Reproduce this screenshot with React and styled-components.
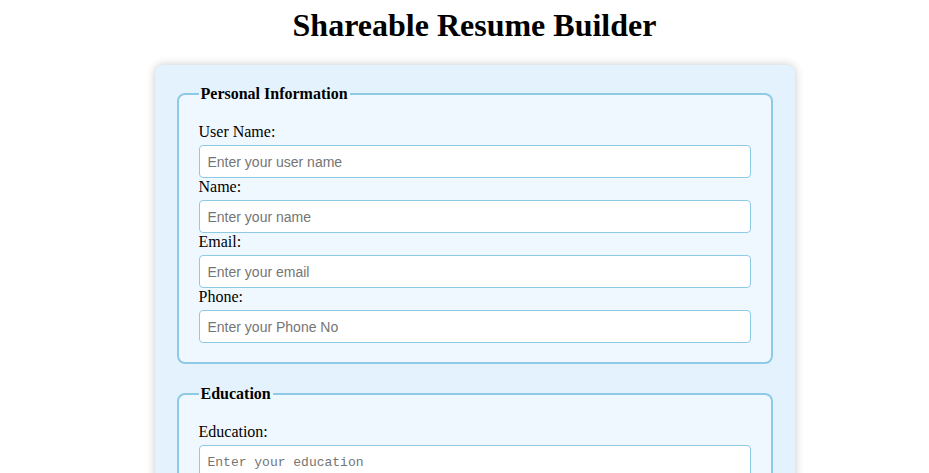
import React from "react";
import styled, { createGlobalStyle } from "styled-components";

const Global = createGlobalStyle`
  html, body { margin: 0; padding: 0; background: #ffffff; }
  body { font-family: "Liberation Serif", "Times New Roman", serif; color: #000; }
`;

const Page = styled.div`
  padding: 7px 0 40px 20px;
`;

const Title = styled.h1`
  margin: 0 0 21px;
  font-size: 32px;
  line-height: 37px;
  font-weight: bold;
  text-align: center;
`;

const Card = styled.form`
  width: 640px;
  box-sizing: border-box;
  margin: 0 auto;
  padding: 20px 20px 20px;
  background: #e3f2fd;
  border-radius: 8px;
  box-shadow: 0 0 10px rgba(0, 0, 0, 0.22);
`;

const Fieldset = styled.fieldset`
  margin: 0 2px 21px;
  padding: 20px 20px 19px;
  border: 2px solid #8ecae6;
  border-radius: 8px;
  background: #f0f8ff;
`;

const Legend = styled.legend`
  padding: 0 2px;
  font-size: 16px;
  font-weight: bold;
  line-height: 18px;
`;

const Label = styled.label`
  display: block;
  font-size: 16px;
  line-height: 18px;
  margin-bottom: 4px;
`;

const Input = styled.input`
  display: block;
  width: 100%;
  box-sizing: border-box;
  height: 33px;
  padding: 0 8px;
  border: 1px solid #8ecae6;
  border-radius: 4px;
  background: #fff;
  font-family: "Liberation Sans", Arial, sans-serif;
  font-size: 14px;
  outline: none;
  &::placeholder { color: #757575; }
`;

const TextArea = styled.textarea`
  display: block;
  width: 100%;
  box-sizing: border-box;
  height: 60px;
  padding: 9px 8px;
  border: 1px solid #8ecae6;
  border-radius: 4px;
  background: #fff;
  font-family: "Liberation Mono", "Courier New", monospace;
  font-size: 13px;
  resize: vertical;
  outline: none;
  &::placeholder { color: #757575; }
`;

const fields = [
  { id: "username", label: "User Name:", ph: "Enter your user name" },
  { id: "name", label: "Name:", ph: "Enter your name" },
  { id: "email", label: "Email:", ph: "Enter your email" },
  { id: "phone", label: "Phone:", ph: "Enter your Phone No" },
];

export default function App() {
  return (
    <>
      <Global />
      <Page>
        <Title>Shareable Resume Builder</Title>
        <Card>
          <Fieldset>
            <Legend>Personal Information</Legend>
            {fields.map((f) => (
              <React.Fragment key={f.id}>
                <Label htmlFor={f.id}>{f.label}</Label>
                <Input id={f.id} placeholder={f.ph} />
              </React.Fragment>
            ))}
          </Fieldset>
          <Fieldset>
            <Legend>Education</Legend>
            <Label htmlFor="education">Education:</Label>
            <TextArea id="education" placeholder="Enter your education" />
          </Fieldset>
        </Card>
      </Page>
    </>
  );
}
